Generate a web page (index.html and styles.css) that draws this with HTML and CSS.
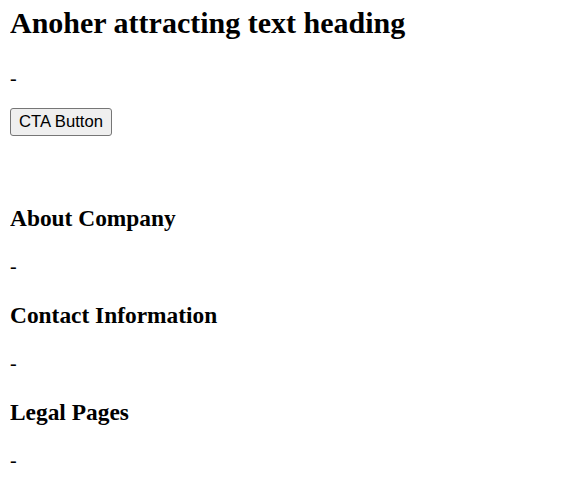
FILE: index.html
```html
<!DOCTYPE html>
<html>
<head>
<meta charset="utf-8">
<link rel="stylesheet" href="styles.css">
</head>
<body>
<section class="hero">
  <h2 class="hero-title">Anoher attracting text heading</h2>
  <p class="text hero-text">-</p>
  <button class="cta">CTA Button</button>
</section>
<footer class="footer">
  <div class="col">
    <h3 class="col-title">About Company</h3>
    <p class="text">-</p>
  </div>
  <div class="col">
    <h3 class="col-title">Contact Information</h3>
    <p class="text">-</p>
  </div>
  <div class="col">
    <h3 class="col-title">Legal Pages</h3>
    <p class="text">-</p>
  </div>
</footer>
</body>
</html>
```

FILE: styles.css
```css
body {
  margin: 6px 10px 10px;
  font-family: "Liberation Serif", "Times New Roman", serif;
  font-size: 20px;
  color: #000;
  background: #fff;
}
.hero {
  margin-bottom: 69px;
}
.hero-title {
  font-size: 30px;
  font-weight: bold;
  margin: 0 0 27px;
}
.text {
  font-size: 20px;
  font-weight: normal;
  margin: 20px 0;
}
.hero-text {
  margin-bottom: 18px;
}
.cta {
  font-family: "Liberation Sans", Arial, sans-serif;
  font-size: 16.67px;
  color: #000;
  background: #efefef;
  border: 1px solid #767676;
  border-radius: 3px;
  padding: 3px 8px;
  margin: 0;
}
.col-title {
  font-size: 23.4px;
  font-weight: bold;
  margin: 23.4px 0;
}
```
